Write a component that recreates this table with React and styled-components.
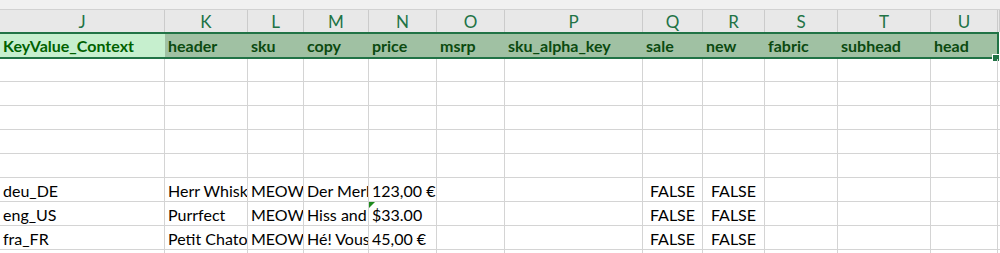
import React from "react";
import styled, { createGlobalStyle } from "styled-components";

const GlobalStyle = createGlobalStyle`
  html, body {
    margin: 0;
    padding: 0;
    background: #fff;
  }

  body {
    font-family: Lato, "Liberation Sans", sans-serif;
    font-size: 16px;
    overflow: hidden;
  }
`;

const widths = [165, 83, 56, 65, 68, 68, 138, 60, 62, 73, 93, 67];
const template = widths.map((w) => `${w}px`).join(" ") + " 1fr";
const selTemplate =
  widths.slice(0, -1).map((w) => `${w}px`).join(" ") + ` ${widths[11] - 1}px`;

const letters = ["J", "K", "L", "M", "N", "O", "P", "Q", "R", "S", "T", "U", ""];
const fields = [
  "KeyValue_Context",
  "header",
  "sku",
  "copy",
  "price",
  "msrp",
  "sku_alpha_key",
  "sale",
  "new",
  "fabric",
  "subhead",
  "head",
];

const rows = [
  ["deu_DE", "Herr Whiskers", "MEOW-1001", "Der Merlin", "123,00 €", "", "", "FALSE", "FALSE"],
  ["eng_US", "Purrfect", "MEOW-1001", "Hiss and purr", "$33.00", "", "", "FALSE", "FALSE"],
  ["fra_FR", "Petit Chaton", "MEOW-1001", "Hé! Vous", "45,00 €", "", "", "FALSE", "FALSE"],
];

const Sheet = styled.div`
  width: 1000px;
  height: 253px;
  overflow: hidden;
  position: relative;
  background: #fff;
`;

const TopStrip = styled.div`
  height: 9px;
  background: #f1f1f1;
  border-bottom: 1px solid #d2d2d2;
`;

const HeaderRow = styled.div`
  display: grid;
  grid-template-columns: ${template};
  height: 22px;
  background: #e8e8e8;
`;

const ColHeader = styled.div`
  box-sizing: border-box;
  border-right: 1px solid #cbcbcb;
  display: flex;
  align-items: flex-end;
  justify-content: center;
  padding-bottom: 2px;
  line-height: 1;
  font-size: 17px;
  color: #217346;
`;

const SelectedRow = styled.div`
  position: relative;
  display: flex;
  height: 27px;
`;

const Selection = styled.div`
  box-sizing: border-box;
  width: 999px;
  height: 27px;
  border-top: 2px solid #217346;
  border-bottom: 2px solid #217346;
  border-right: 2px solid #217346;
  display: grid;
  grid-template-columns: ${selTemplate};
`;

const SelCell = styled.div`
  background: ${(p) => (p.$active ? "#c6efce" : "#a0c1a3")};
  color: ${(p) => (p.$active ? "#006100" : "#0b4a10")};
  font-weight: 700;
  display: flex;
  align-items: flex-end;
  padding: 0 0 3px 3px;
  line-height: 1;
  white-space: nowrap;
  overflow: hidden;
`;

const FillHandle = styled.div`
  position: absolute;
  right: 0;
  bottom: -3px;
  width: 6px;
  height: 6px;
  background: #217346;
  border: 1px solid #fff;
`;

const Row = styled.div`
  display: grid;
  grid-template-columns: ${template};
  height: ${(p) => p.$h || 24}px;
  box-sizing: border-box;
  border-bottom: 1px solid #d4d4d4;
`;

const Cell = styled.div`
  position: relative;
  box-sizing: border-box;
  border-right: 1px solid #d4d4d4;
  display: flex;
  align-items: flex-end;
  justify-content: ${(p) => (p.$center ? "center" : "flex-start")};
  padding: ${(p) => (p.$center ? "0 0 2px 0" : "0 0 2px 3px")};
  line-height: 1;
  color: #000;
  white-space: nowrap;
  overflow: hidden;
`;

const ErrorMark = styled.span`
  position: absolute;
  left: 0;
  top: 0;
  width: 0;
  height: 0;
  border-top: 6px solid #1e8a1e;
  border-right: 6px solid transparent;
`;

const EmptyRow = ({ h }) => (
  <Row $h={h}>
    {letters.map((l, i) => (
      <Cell key={i} />
    ))}
  </Row>
);

export default function App() {
  return (
    <>
      <GlobalStyle />
      <Sheet>
        <TopStrip />
        <HeaderRow>
          {letters.map((l, i) => (
            <ColHeader key={i}>{l}</ColHeader>
          ))}
        </HeaderRow>
        <SelectedRow>
          <Selection>
            {fields.map((f, i) => (
              <SelCell key={f} $active={i === 0}>
                {f}
              </SelCell>
            ))}
          </Selection>
          <FillHandle />
        </SelectedRow>
        <EmptyRow h={23} />
        <EmptyRow />
        <EmptyRow />
        <EmptyRow />
        <EmptyRow />
        {rows.map((r, ri) => (
          <Row key={r[0]}>
            {letters.map((l, i) => (
              <Cell key={i} $center={i === 7 || i === 8}>
                {i === 4 && ri === 1 && <ErrorMark />}
                {r[i] || ""}
              </Cell>
            ))}
          </Row>
        ))}
        <EmptyRow />
      </Sheet>
    </>
  );
}
